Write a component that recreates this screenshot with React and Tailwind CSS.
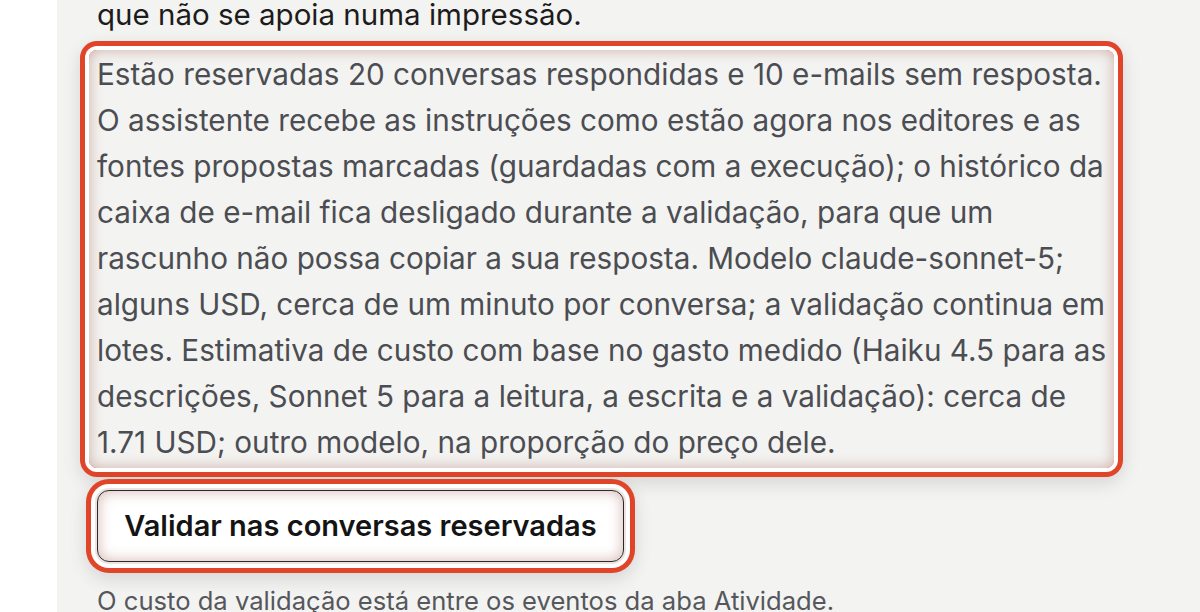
const lines = [
  "Estão reservadas 20 conversas respondidas e 10 e-mails sem resposta.",
  "O assistente recebe as instruções como estão agora nos editores e as",
  "fontes propostas marcadas (guardadas com a execução); o histórico da",
  "caixa de e-mail fica desligado durante a validação, para que um",
  "rascunho não possa copiar a sua resposta. Modelo claude-sonnet-5;",
  "alguns USD, cerca de um minuto por conversa; a validação continua em",
  "lotes. Estimativa de custo com base no gasto medido (Haiku 4.5 para as",
  "descrições, Sonnet 5 para a leitura, a escrita e a validação): cerca de",
  "1.71 USD; outro modelo, na proporção do preço dele.",
];

export default function App() {
  return (
    <div className="flex h-[612px] w-[1200px] overflow-hidden" style={{ fontFamily: "Inter, 'Noto Sans', sans-serif" }}>
      <div className="w-[57px] shrink-0 bg-white" />
      <div className="flex-1 bg-[#f3f3f1] pl-[32px]">
        <p className="ml-[8px] mt-[-6px] whitespace-nowrap text-[29.5px] leading-[40px] text-[#1c1c1c]">
          que não se apoia numa impressão.
        </p>
        <div className="mt-[16px] w-[1025px] rounded-[8px] px-[8px] pt-[1px] pb-[3px] text-[29.7px] leading-[46px] text-[#4b4d52] shadow-[inset_0_0_14px_rgba(150,70,55,0.4),0_0_0_4px_#ffffff,0_0_0_9px_#e04529,0_6px_18px_9px_rgba(0,0,0,0.12)]">
          {lines.map((l, i) => (
            <div key={i} className="whitespace-nowrap">{l}</div>
          ))}
        </div>
        <button className="ml-[8px] mt-[22px] flex h-[72px] w-[527px] items-center justify-center rounded-[12px] border-[1.5px] border-[#2a2a2a] bg-white text-[29px] font-semibold text-[#141414] shadow-[inset_0_0_14px_rgba(150,70,55,0.4),0_0_0_2px_#ece4e2,0_0_0_6px_#ffffff,0_0_0_11px_#e04529,0_6px_18px_11px_rgba(0,0,0,0.12)]">
          Validar nas conversas reservadas
        </button>
        <p className="ml-[8px] mt-[21px] whitespace-nowrap text-[25.6px] leading-[36px] text-[#55575c]">
          O custo da validação está entre os eventos da aba Atividade.
        </p>
      </div>
    </div>
  );
}
